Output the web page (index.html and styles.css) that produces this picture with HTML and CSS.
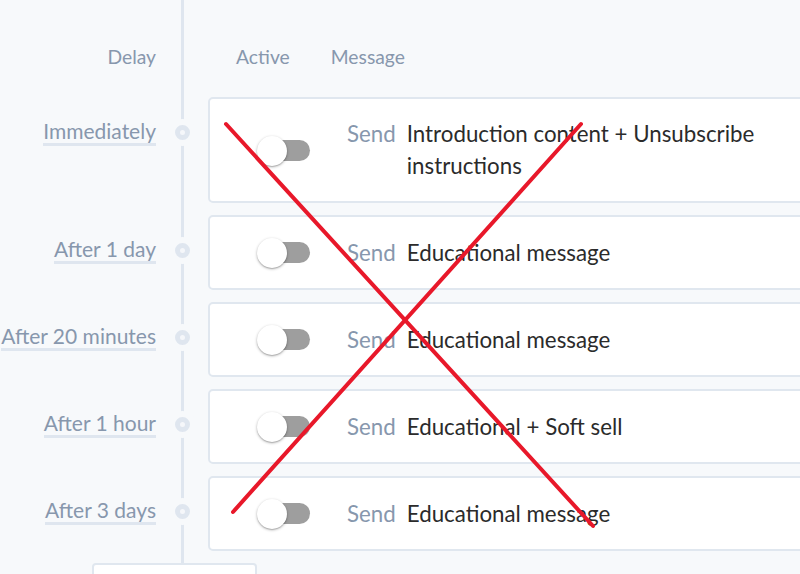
FILE: index.html
```html
<!DOCTYPE html>
<html lang="en">
<head>
<meta charset="utf-8">
<title>Sequence</title>
<link rel="stylesheet" href="styles.css">
</head>
<body>
<div class="page">
  <div class="timeline">
    <div class="head">
      <div class="col-delay">Delay</div>
      <div class="col-dot"></div>
      <div class="head-card">
        <span class="h-active">Active</span>
        <span class="h-message">Message</span>
      </div>
    </div>

    <div class="row">
      <div class="col-delay"><span class="delay">Immediately</span></div>
      <div class="col-dot"><span class="dot"></span></div>
      <div class="card">
        <div class="toggle"><span class="track"></span><span class="knob"></span></div>
        <div class="msg"><span class="send">Send</span><span class="text">Introduction content + Unsubscribe instructions</span></div>
      </div>
    </div>

    <div class="row">
      <div class="col-delay"><span class="delay">After 1 day</span></div>
      <div class="col-dot"><span class="dot"></span></div>
      <div class="card">
        <div class="toggle"><span class="track"></span><span class="knob"></span></div>
        <div class="msg"><span class="send">Send</span><span class="text">Educational message</span></div>
      </div>
    </div>

    <div class="row">
      <div class="col-delay"><span class="delay">After 20 minutes</span></div>
      <div class="col-dot"><span class="dot"></span></div>
      <div class="card">
        <div class="toggle"><span class="track"></span><span class="knob"></span></div>
        <div class="msg"><span class="send">Send</span><span class="text">Educational message</span></div>
      </div>
    </div>

    <div class="row">
      <div class="col-delay"><span class="delay">After 1 hour</span></div>
      <div class="col-dot"><span class="dot"></span></div>
      <div class="card">
        <div class="toggle"><span class="track"></span><span class="knob"></span></div>
        <div class="msg"><span class="send">Send</span><span class="text">Educational + Soft sell</span></div>
      </div>
    </div>

    <div class="row">
      <div class="col-delay"><span class="delay">After 3 days</span></div>
      <div class="col-dot"><span class="dot"></span></div>
      <div class="card">
        <div class="toggle"><span class="track"></span><span class="knob"></span></div>
        <div class="msg"><span class="send">Send</span><span class="text">Educational message</span></div>
      </div>
    </div>

    <div class="add-box"></div>
  </div>

  <svg class="cross" width="800" height="574" viewBox="0 0 800 574" aria-hidden="true">
    <line x1="226" y1="124" x2="593" y2="526" />
    <line x1="581" y1="124" x2="233" y2="512" />
  </svg>
</div>
</body>
</html>
```

FILE: styles.css
```css
html, body {
  margin: 0;
  padding: 0;
  background: #f7f9fb;
  overflow: hidden;
}
body {
  width: 800px;
  height: 574px;
  font-family: Lato, "Open Sans", sans-serif;
}
.page {
  position: relative;
  width: 800px;
  height: 574px;
  overflow: hidden;
}
.timeline {
  padding-top: 45px;
  width: 1000px;
  background: linear-gradient(to right, transparent 181px, #dfe6ef 181px, #dfe6ef 184px, transparent 184px);
  min-height: 620px;
}
.head {
  display: flex;
  height: 24px;
  line-height: 24px;
  margin-bottom: 28px;
  font-size: 19.3px;
  color: #8797ad;
}
.col-delay {
  width: 156px;
  flex: none;
  text-align: right;
}
.col-dot {
  width: 52px;
  flex: none;
  display: flex;
  justify-content: center;
}
.head-card {
  display: flex;
  padding-left: 28px;
}
.h-message {
  margin-left: 41px;
}
.row {
  display: flex;
  align-items: flex-start;
  margin-bottom: 12px;
}
.row .col-delay {
  padding-top: 21px;
}
.delay {
  display: inline-block;
  font-size: 21px;
  line-height: 25px;
  color: #8797ad;
  padding-bottom: 0;
  border-bottom: 3px solid #dfe6ef;
}
.row .col-dot {
  padding-top: 28px;
}
.dot {
  width: 5px;
  height: 5px;
  border-radius: 50%;
  background: #f5f7fa;
  border: 5px solid #dfe6ef;
  box-shadow: 0 0 0 6px #f7f9fb;
}
.card {
  flex: none;
  width: 700px;
  min-height: 75px;
  box-sizing: border-box;
  background: #fff;
  border: 2px solid #e0e7ef;
  border-radius: 5px;
  padding: 20px 0 19px 47px;
  display: flex;
  align-items: center;
}
.toggle {
  position: relative;
  width: 53px;
  height: 30px;
  flex: none;
}
.track {
  position: absolute;
  left: 2px;
  top: 4px;
  width: 51px;
  height: 21px;
  border-radius: 11px;
  background: #9e9e9e;
}
.knob {
  position: absolute;
  left: 0;
  top: 0;
  width: 30px;
  height: 30px;
  border-radius: 50%;
  background: #fff;
  box-shadow: 0 1px 3px rgba(0,0,0,0.3), 0 1px 1px rgba(0,0,0,0.14);
}
.msg {
  display: flex;
  align-items: flex-start;
  margin-left: 37px;
  margin-top: -1px;
  font-size: 22.3px;
  line-height: 32px;
}
.send {
  color: #8797ad;
  flex: none;
}
.text {
  color: #2b2b2b;
  margin-left: 11px;
  width: 420px;
}
.add-box {
  margin-top: 4px;
  margin-left: 92px;
  width: 165px;
  height: 40px;
  box-sizing: border-box;
  background: #fff;
  border: 2px solid #e0e7ef;
  border-radius: 4px;
}
.cross {
  position: absolute;
  left: 0;
  top: 0;
  pointer-events: none;
}
.cross line {
  stroke: #e8182a;
  stroke-width: 4;
  stroke-linecap: round;
}
```
